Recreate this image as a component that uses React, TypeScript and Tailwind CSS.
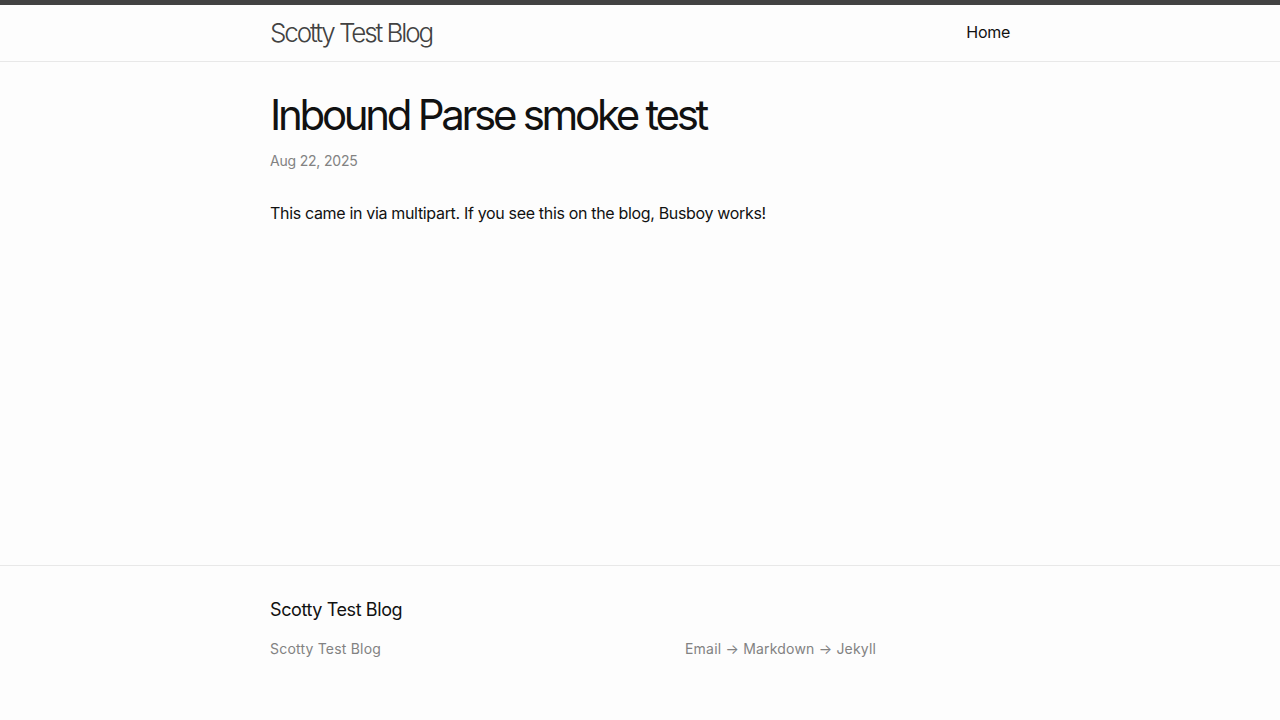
import React from "react";

const font = { fontFamily: "Inter, 'Noto Sans', sans-serif" };

const Header = () => (
  <header className="border-t-[5px] border-t-[#424242] border-b border-b-[#e8e8e8] min-h-[62px]">
    <div className="max-w-[800px] mx-auto px-[30px] flex justify-between items-start">
      <a href="#" className="text-[26px] font-light leading-[56px] tracking-[-2.1px] text-[#424242]">
        Scotty Test Blog
      </a>
      <nav className="leading-[54px]">
        <a href="#" className="text-[16px] tracking-[-0.3px] text-[#111]">
          Home
        </a>
      </nav>
    </div>
  </header>
);

const Footer = () => (
  <footer className="border-t border-[#e8e8e8] pt-[30px] pb-[61px]">
    <div className="max-w-[800px] mx-auto px-[30px]">
      <h2 className="text-[18px] leading-[27px] tracking-[-0.4px] text-[#111] mb-[15px]">Scotty Test Blog</h2>
      <div className="flex text-[14px] leading-[21px] tracking-[0.2px] text-[#828282]">
        <div className="w-[415px]">Scotty Test Blog</div>
        <div>Email → Markdown → Jekyll</div>
      </div>
    </div>
  </footer>
);

export default function App() {
  return (
    <div className="min-h-screen flex flex-col bg-[#fdfdfd] text-[#111]" style={font}>
      <Header />
      <main className="flex-1 pt-[32px] pb-[30px]">
        <article className="max-w-[800px] mx-auto px-[30px]">
          <div className="mb-[30px]">
            <h1 className="text-[42px] leading-none tracking-[-3.3px]">Inbound Parse smoke test</h1>
            <p className="text-[14px] leading-[21px] tracking-[-0.2px] text-[#828282] mt-[14px]">Aug 22, 2025</p>
          </div>
          <p className="text-[16px] leading-[24px] tracking-[-0.33px]">
            This came in via multipart. If you see this on the blog, Busboy works!
          </p>
        </article>
      </main>
      <Footer />
    </div>
  );
}
